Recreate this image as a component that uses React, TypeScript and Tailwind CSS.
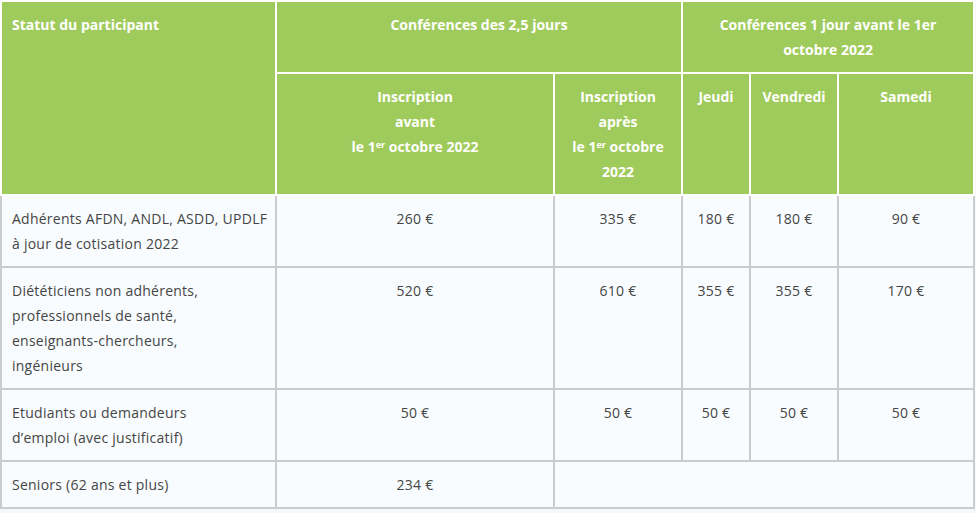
export default function App() {
  const th = 'border-2 border-white px-[10px] py-[10px] align-top font-bold text-white'
  const td = 'border-2 border-[#cccccc] px-[10px] py-[10px] align-top text-center'
  const first = 'border-2 border-[#cccccc] px-[10px] py-[10px] align-top text-left whitespace-nowrap'

  return (
    <div className="min-h-screen bg-[#f3f9fc]" style={{ fontFamily: '"Open Sans", "Noto Sans", sans-serif' }}>
      <table className="w-[973px] table-fixed border-collapse text-[14px] leading-[25px] tracking-[0.25px] text-[#454545]">
        <colgroup>
          <col className="w-[275px]" />
          <col className="w-[278px]" />
          <col className="w-[128px]" />
          <col className="w-[68px]" />
          <col className="w-[88px]" />
          <col className="w-[136px]" />
        </colgroup>
        <thead className="bg-[#9fcb5c] text-[14px] leading-[25px] tracking-normal">
          <tr>
            <th rowSpan={2} className={`${th} text-left`}>Statut du participant</th>
            <th colSpan={2} className={`${th} text-center`}>Conférences des 2,5 jours</th>
            <th colSpan={3} className={`${th} text-center`}>
              Conférences 1 jour avant le 1er
              <br />
              octobre 2022
            </th>
          </tr>
          <tr>
            <th className={`${th} text-center`}>
              Inscription
              <br />
              avant
              <br />
              le 1<sup className="text-[9px] leading-none">er</sup> octobre 2022
            </th>
            <th className={`${th} text-center`}>
              Inscription
              <br />
              après
              <br />
              le 1<sup className="text-[9px] leading-none">er</sup> octobre
              <br />
              2022
            </th>
            <th className={`${th} text-center`}>Jeudi</th>
            <th className={`${th} text-center`}>Vendredi</th>
            <th className={`${th} text-center`}>Samedi</th>
          </tr>
        </thead>
        <tbody className="bg-[#f8fcfe]">
          <tr>
            <td className={first}>
              Adhérents AFDN, ANDL, ASDD, UPDLF
              <br />
              à jour de cotisation 2022
            </td>
            <td className={td}>260 €</td>
            <td className={td}>335 €</td>
            <td className={td}>180 €</td>
            <td className={td}>180 €</td>
            <td className={td}>90 €</td>
          </tr>
          <tr>
            <td className={first}>
              Diététiciens non adhérents,
              <br />
              professionnels de santé,
              <br />
              enseignants-chercheurs,
              <br />
              ingénieurs
            </td>
            <td className={td}>520 €</td>
            <td className={td}>610 €</td>
            <td className={td}>355 €</td>
            <td className={td}>355 €</td>
            <td className={td}>170 €</td>
          </tr>
          <tr>
            <td className={first}>
              Etudiants ou demandeurs
              <br />
              d’emploi (avec justificatif)
            </td>
            <td className={td}>50 €</td>
            <td className={td}>50 €</td>
            <td className={td}>50 €</td>
            <td className={td}>50 €</td>
            <td className={td}>50 €</td>
          </tr>
          <tr>
            <td className={first}>Seniors (62 ans et plus)</td>
            <td className={td}>234 €</td>
            <td colSpan={4} className={td}></td>
          </tr>
        </tbody>
      </table>
    </div>
  )
}
